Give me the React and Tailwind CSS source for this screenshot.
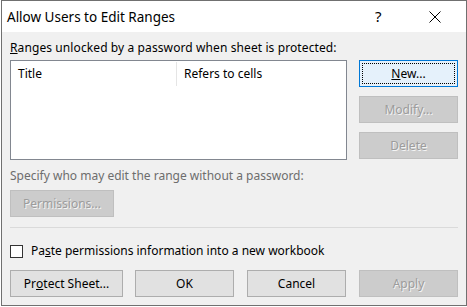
import React from 'react';

const FONT = { fontFamily: '"Noto Sans", "Liberation Sans", sans-serif' };

const Btn = ({ children, className = '', disabled, focused }) => {
  if (focused) {
    return (
      <div className={`h-[27px] border border-[#0078d7] bg-[#e5f1fb] p-[2px] ${className}`}>
        <div className="h-full border border-dotted border-black flex items-center justify-center text-[12px] text-black">
          {children}
        </div>
      </div>
    );
  }
  return (
    <div
      className={`h-[27px] border flex items-center justify-center text-[12px] ${
        disabled
          ? 'border-[#bfbfbf] bg-[#cccccc] text-[#9c9c9c] [text-shadow:1px_1px_0_#f4f4f4]'
          : 'border-[#adadad] bg-[#e1e1e1] text-black'
      } ${className}`}
    >
      {children}
    </div>
  );
};

export default function App() {
  return (
    <div className="w-[467px] h-[307px] bg-white" style={FONT}>
      <div className="ml-px w-[466px] h-[306px] border border-[#707070] flex flex-col bg-[#f0f0f0]">
        {/* Title bar */}
        <div className="h-[31px] bg-white flex items-center pl-[5px] text-black">
          <span className="text-[13.5px] flex-1 pt-px">Allow Users to Edit Ranges</span>
          <span className="text-[15px] w-[12px] mr-[42px]">?</span>
          <svg width="12" height="12" viewBox="0 0 12 12" className="mr-[25px]">
            <path d="M0.5 0.5 L11.5 11.5 M11.5 0.5 L0.5 11.5" stroke="#000" strokeWidth="1" />
          </svg>
        </div>

        {/* Body */}
        <div className="flex-1 px-[8px] text-[12px] text-black">
          <div className="mt-[8px] h-[16px] leading-[16px] tracking-[0.1px]">
            <u>R</u>anges unlocked by a password when sheet is protected:
          </div>

          <div className="mt-[4px] flex gap-[12px]">
            <div className="w-[337px] h-[100px] border border-[#828790] bg-white">
              <div className="flex h-[25px] items-center">
                <div className="w-[166px] h-[24px] pl-[7px] flex items-center border-r border-[#e5e5e5]">Title</div>
                <div className="pl-[7px]">Refers to cells</div>
              </div>
            </div>
            <div className="w-[99px] flex flex-col gap-[9px]">
              <Btn focused><u>N</u>ew...</Btn>
              <Btn disabled>Modify...</Btn>
              <Btn disabled>Delete</Btn>
            </div>
          </div>

          <div className="mt-[8px] h-[16px] leading-[16px] text-[#6d6d6d]">
            Specify who may edit the range without a password:
          </div>
          <Btn disabled className="mt-[6px] w-[104px]">Permissions...</Btn>

          <div className="mt-[10px] h-px bg-[#dadada]" />

          <div className="mt-[16px] flex items-center h-[14px]">
            <div className="w-[13px] h-[13px] border border-[#333] bg-white" />
            <span className="ml-[8px]">Pa<u>s</u>te permissions information into a new workbook</span>
          </div>

          <div className="mt-[12px] flex">
            <Btn className="w-[113px]">Pr<u>o</u>tect Sheet...</Btn>
            <Btn className="ml-[12px] w-[99px]">OK</Btn>
            <Btn className="ml-[13px] w-[99px]">Cancel</Btn>
            <Btn disabled className="ml-[13px] w-[99px]">Apply</Btn>
          </div>
        </div>
      </div>
    </div>
  );
}
